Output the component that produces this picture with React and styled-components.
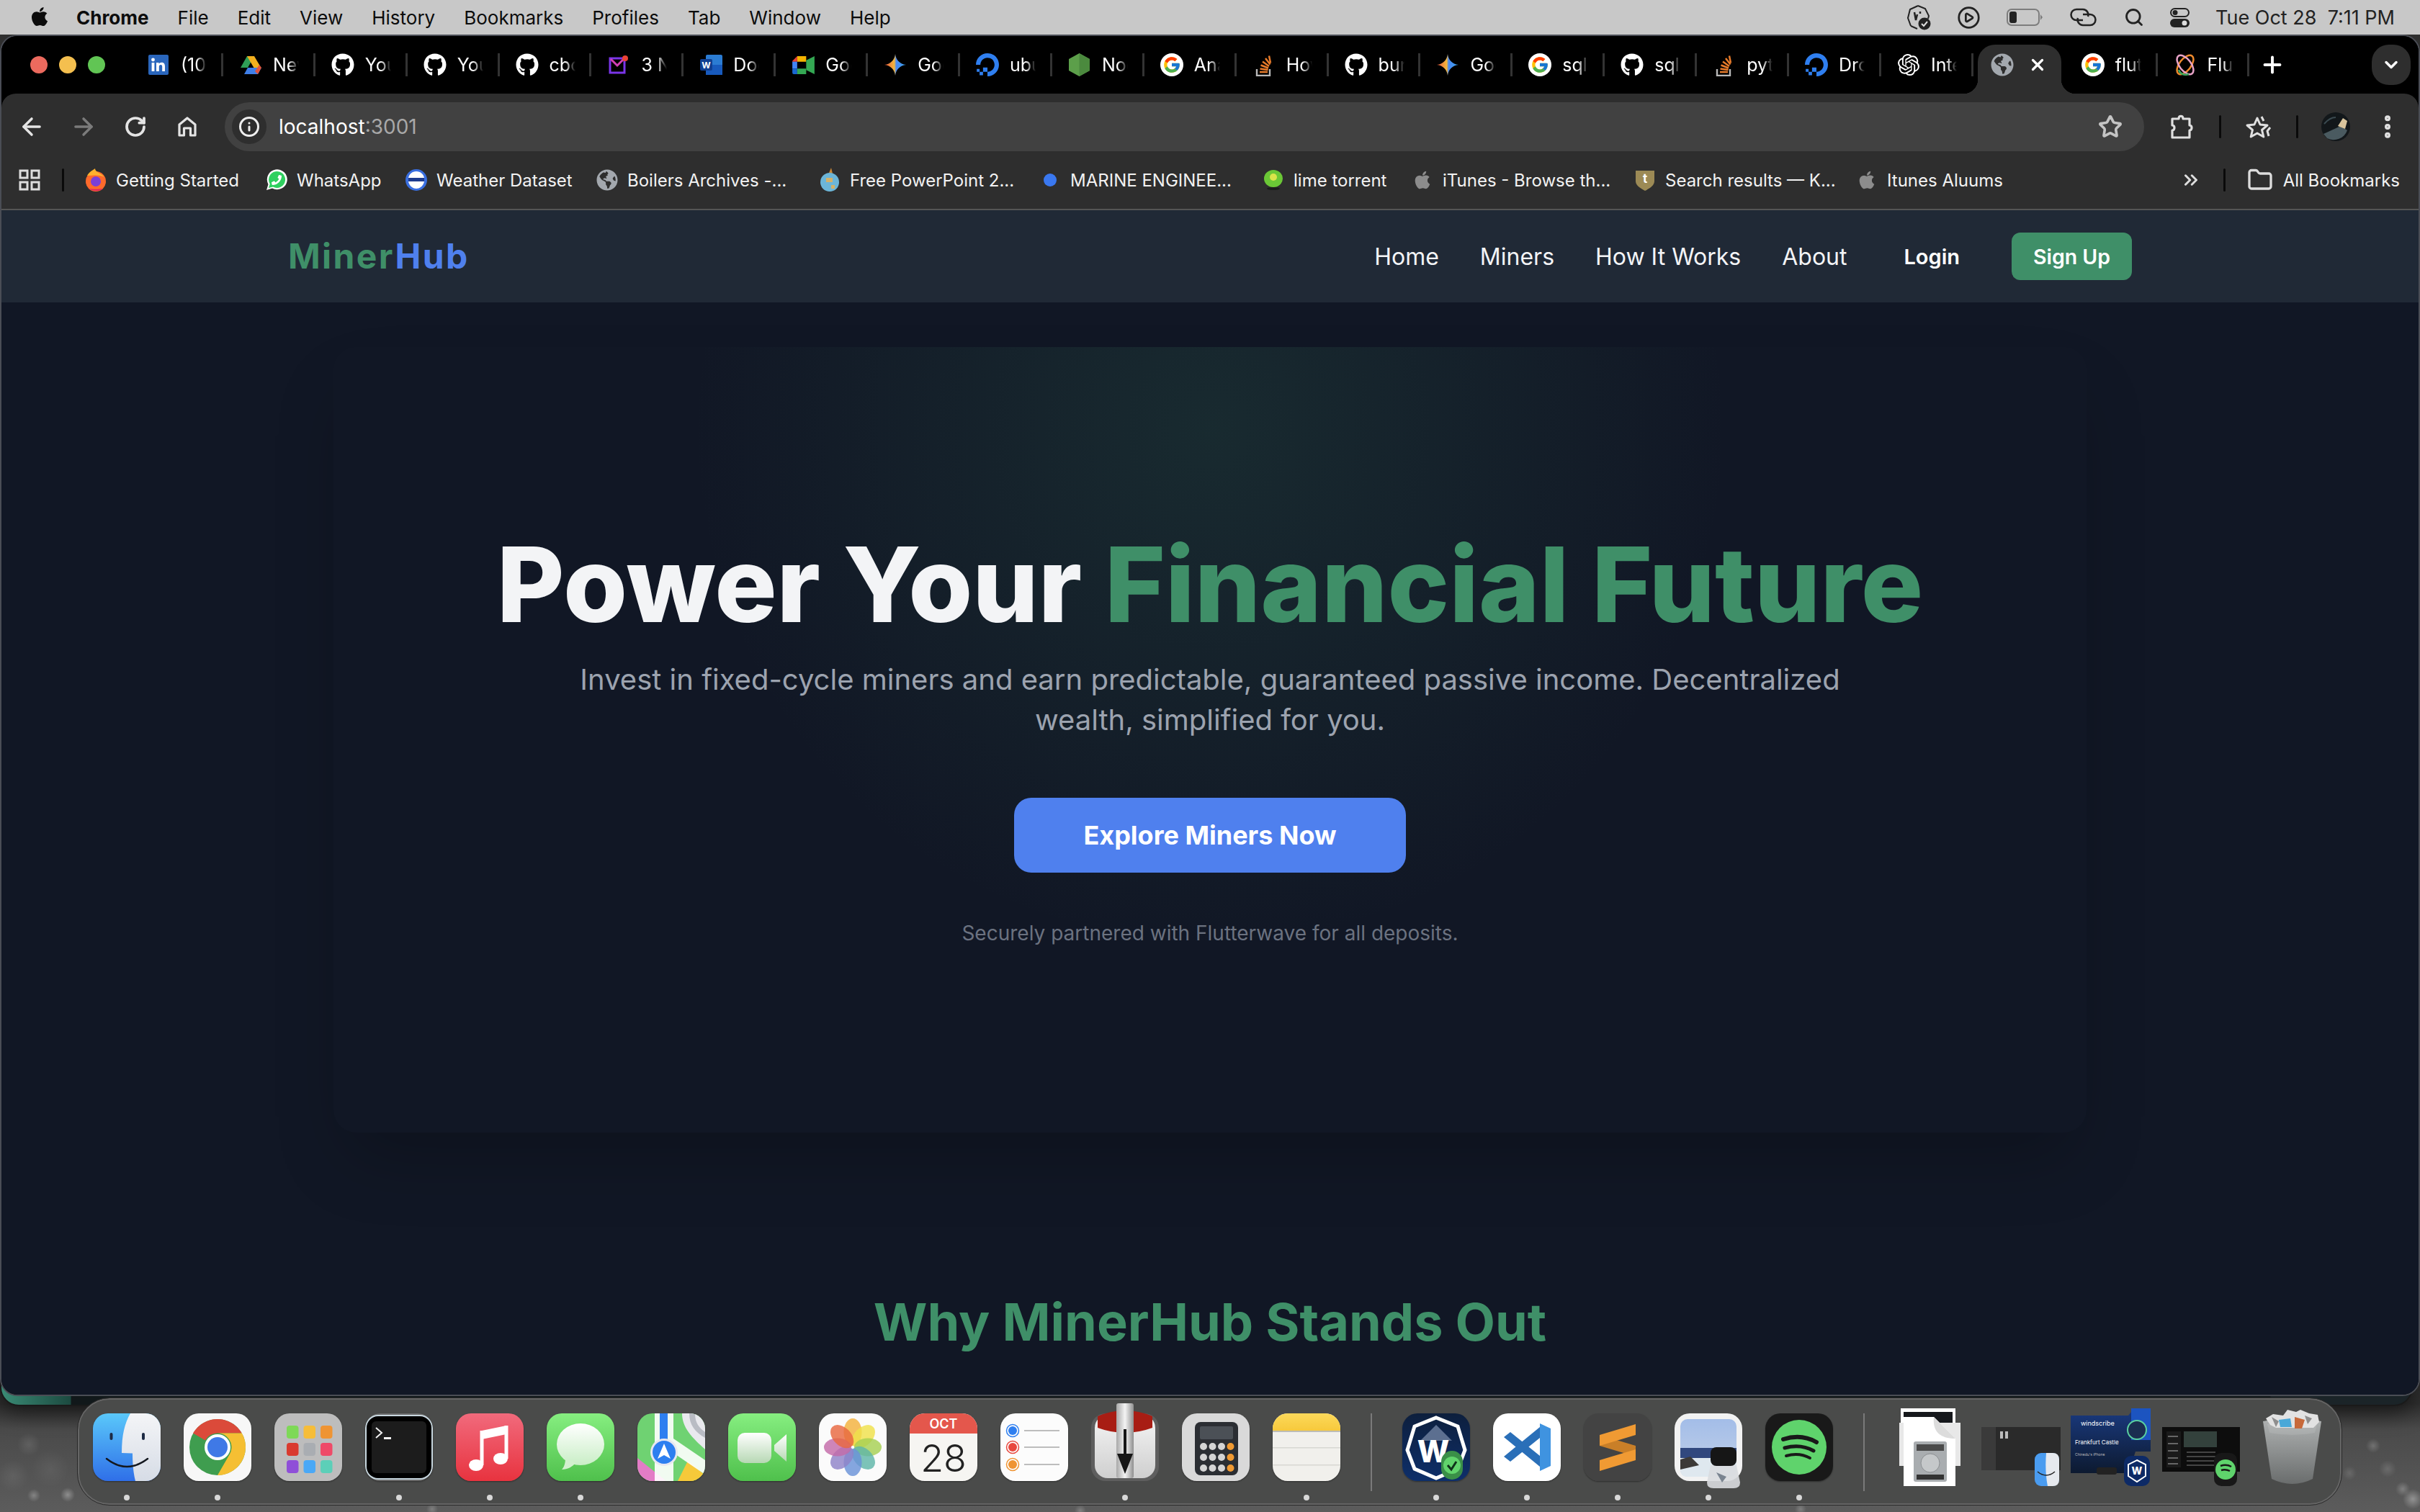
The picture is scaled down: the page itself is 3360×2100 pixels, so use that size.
import React from 'react'
import styled, { createGlobalStyle } from 'styled-components'
import {
  ArrowLeft, ArrowRight, RotateCw, Info, Star, MoreVertical, ChevronDown, Plus, X,
  Search, Folder, ChevronsRight, CirclePlay,
} from 'lucide-react'
import { FaApple, FaGithub, FaGlobeAmericas, FaPhoneAlt } from 'react-icons/fa'
import { FcGoogle } from 'react-icons/fc'
import { SiOpenai, SiDigitalocean } from 'react-icons/si'

const GREEN = '#3f8f68'
const BLUE = '#4f80ee'

const GlobalStyle = createGlobalStyle`
  html, body { margin: 0; padding: 0; background: #444; }
  body { font-family: Inter, "Liberation Sans", sans-serif; }
  * { box-sizing: border-box; }
`

const Desktop = styled.div`
  position: relative;
  width: 3360px;
  height: 2100px;
  overflow: hidden;
  display: flex;
  flex-direction: column;
  background:
    radial-gradient(circle at 94px 2076px, rgba(255,255,255,.32), transparent 10px),
    radial-gradient(circle at 47px 2077px, rgba(255,255,255,.26), transparent 9px),
    radial-gradient(circle at 40px 2006px, rgba(255,255,255,.1), transparent 16px),
    radial-gradient(circle at 70px 2040px, rgba(255,255,255,.06), transparent 26px),
    radial-gradient(circle at 18px 2050px, rgba(255,255,255,.07), transparent 22px),
    radial-gradient(circle at 3350px 2082px, rgba(255,255,255,.34), transparent 14px),
    radial-gradient(circle at 3336px 2068px, rgba(255,255,255,.24), transparent 10px),
    radial-gradient(circle at 3295px 2008px, rgba(255,255,255,.2), transparent 10px),
    radial-gradient(circle at 3315px 2040px, rgba(255,255,255,.14), transparent 12px),
    radial-gradient(circle at 3262px 2046px, rgba(255,255,255,.12), transparent 10px),
    radial-gradient(circle at 600px 2096px, rgba(255,255,255,.22), transparent 8px),
    radial-gradient(circle at 1500px 2098px, rgba(255,255,255,.22), transparent 8px),
    radial-gradient(circle at 2500px 2096px, rgba(255,255,255,.22), transparent 8px),
    linear-gradient(180deg, #2f2f2f 1950px, #4a4a4a 1985px, #5c5c5c 2100px);
`

const MenuBar = styled.header`
  position: relative;
  z-index: 3;
  flex: none;
  height: 48px;
  padding: 0 35px 0 40px;
  display: flex;
  align-items: center;
  gap: 40px;
  background: #c8c8c8;
  color: #0c0c0c;
  font-size: 26px;
`

const AppleMark = styled(FaApple)`
  margin: -2px -4px 0 0;
`

const MenuItem = styled.span`
  font-weight: ${p => (p.$bold ? 700 : 400)};
`

const MenuStatus = styled.div`
  margin-left: auto;
  display: flex;
  align-items: center;
  gap: 36px;
  font-size: 27px;
  color: #222;
  svg { display: block; }
`

const BackWindow = styled.div`
  position: absolute;
  left: 0;
  top: 1880px;
  width: 3350px;
  height: 73px;
  border-radius: 0 0 26px 26px;
  border: 2px solid #1a1a1a;
  background: linear-gradient(90deg, #3a8b75 0, #1c4a40 96px, #11181a 97px, #11181a 3150px, #1b2428 3151px);
  box-shadow: 0 8px 30px rgba(0,0,0,.55);
`

const Window = styled.div`
  position: relative;
  z-index: 2;
  flex: none;
  height: 1891px;
  display: flex;
  flex-direction: column;
  overflow: hidden;
  border: 2px solid #4a4d55;
  border-radius: 24px;
  background: #000;
`

const TabStrip = styled.div`
  flex: none;
  height: 80px;
  display: flex;
  align-items: flex-end;
  padding-left: 40px;
  background: #000;
`

const TabRow = styled.div`
  height: 68px;
  display: flex;
  align-items: flex-start;
  width: 100%;
`

const TrafficLights = styled.div`
  width: 140px;
  height: 56px;
  display: flex;
  align-items: center;
  gap: 16px;
`

const Light = styled.span`
  width: 24px;
  height: 24px;
  border-radius: 50%;
  background: ${p => p.$color};
`

const Tab = styled.div`
  position: relative;
  flex: none;
  width: 127.9px;
  height: 56px;
  padding-left: 22px;
  display: flex;
  align-items: center;
  gap: 15px;
  color: #fff;
  font-size: 25px;
  svg { display: block; }
  &::after {
    content: '';
    position: absolute;
    right: 0;
    top: 12px;
    height: 32px;
    width: 3px;
    background: #333;
  }
`

const FavSlot = styled.span`
  flex: none;
  width: 32px;
  display: flex;
  justify-content: center;
`

const TabTitle = styled.span`
  width: 36px;
  overflow: hidden;
  white-space: nowrap;
  -webkit-mask-image: linear-gradient(90deg, #000 60%, transparent 100%);
  mask-image: linear-gradient(90deg, #000 60%, transparent 100%);
`

const ActiveTab = styled.div`
  position: relative;
  flex: none;
  width: 116px;
  height: 68px;
  margin: 0 5.9px 0 6px;
  padding: 0 20px 12px 18px;
  display: flex;
  align-items: center;
  justify-content: space-between;
  border-radius: 24px 24px 0 0;
  background: #2e2e2e;
  color: #fff;
  &::before, &::after {
    content: '';
    position: absolute;
    bottom: 0;
    width: 20px;
    height: 20px;
  }
  &::before { left: -20px; background: radial-gradient(circle at 0 0, transparent 20px, #2e2e2e 20.5px); }
  &::after { right: -20px; background: radial-gradient(circle at 100% 0, transparent 20px, #2e2e2e 20.5px); }
`

const NewTab = styled.div`
  flex: none;
  width: 64px;
  height: 56px;
  display: flex;
  align-items: center;
  justify-content: center;
  color: #fff;
`

const TabMenu = styled.div`
  margin-left: auto;
  margin-right: 11px;
  width: 54px;
  height: 56px;
  border-radius: 24px;
  background: #2e2e2e;
  color: #fff;
  display: flex;
  align-items: center;
  justify-content: center;
`

const Toolbar = styled.div`
  flex: none;
  height: 92px;
  padding: 0 23px 0 6px;
  display: flex;
  align-items: center;
  background: #2e2e2e;
  border-radius: 20px 20px 0 0;
`

const NavButton = styled.div`
  flex: none;
  width: 72px;
  display: flex;
  justify-content: center;
  color: ${p => (p.$dim ? '#7b7b7b' : '#e4e4e4')};
`

const Omnibox = styled.div`
  flex: 1;
  height: 68px;
  margin: 0 32px 0 16px;
  padding: 0 30px 0 10px;
  display: flex;
  align-items: center;
  border-radius: 34px;
  background: #414141;
  color: #fff;
  font-size: 28px;
`

const InfoBadge = styled.span`
  flex: none;
  width: 48px;
  height: 48px;
  margin-right: 17px;
  border-radius: 50%;
  background: #2e2e2e;
  color: #eee;
  display: flex;
  align-items: center;
  justify-content: center;
`

const Port = styled.span`
  color: #a8a8a8;
`

const OmniStar = styled.span`
  margin-left: auto;
  display: flex;
  color: #c4c4c4;
`

const ToolIcons = styled.div`
  flex: none;
  display: flex;
  align-items: center;
  gap: 32px;
  color: #e0e0e0;
  svg { display: block; }
`

const ToolDivider = styled.span`
  width: 3px;
  height: 32px;
  border-radius: 2px;
  background: #0a0a0a;
`

const BookmarkBar = styled.div`
  flex: none;
  height: 70px;
  padding: 0 26px 12px 24px;
  display: flex;
  align-items: center;
  background: #2e2e2e;
  color: #f2f2f2;
  font-size: 24px;
  border-bottom: 2px solid #555;
  svg { display: block; flex: none; }
`

const BarDivider = styled.span`
  flex: none;
  width: 3px;
  height: 32px;
  margin: ${p => p.$margin};
  border-radius: 2px;
  background: #0a0a0a;
`

const Bookmark = styled.div`
  flex: none;
  display: flex;
  align-items: center;
  gap: 12px;
  width: ${p => (p.$w ? `${p.$w}px` : 'auto')};
  white-space: nowrap;
`

const BarEnd = styled.div`
  margin-left: auto;
  display: flex;
  align-items: center;
  color: #ddd;
`

const EndLabel = styled.span`
  margin-left: 14px;
  color: #f2f2f2;
`

const Page = styled.div`
  flex: 1;
  overflow: hidden;
  background: #111725;
`

const TopNav = styled.nav`
  height: 128px;
  background: #202936;
`

const NavInner = styled.div`
  width: 2560px;
  height: 100%;
  margin: 0 auto;
  display: flex;
  align-items: center;
  justify-content: space-between;
`

const Logo = styled.div`
  font-size: 48px;
  font-weight: 700;
  letter-spacing: 2.4px;
  margin-top: -2px;
  color: ${GREEN};
  span { color: ${BLUE}; }
`

const NavLinks = styled.div`
  display: flex;
  align-items: center;
  color: #f3f4f6;
  font-size: 32px;
  gap: 57px;
`

const NavAuth = styled.div`
  display: flex;
  align-items: center;
  margin-left: 22px;
  gap: 72px;
  font-size: 29px;
  font-weight: 600;
  color: #fff;
`

const SignUp = styled.div`
  width: 167px;
  height: 66px;
  border-radius: 12px;
  background: ${GREEN};
  font-size: 28.5px;
  display: flex;
  align-items: center;
  justify-content: center;
`

const Hero = styled.section`
  width: 2434px;
  margin: 62px auto 0;
  padding: 258px 0 257px;
  display: flex;
  flex-direction: column;
  align-items: center;
  text-align: center;
  border-radius: 32px;
  box-shadow: 0 50px 100px -24px rgba(0, 0, 0, .25);
  background:
    radial-gradient(ellipse 720px 720px at 50% 10.5%, rgba(63, 143, 104, .16), transparent 100%);
`

const Title = styled.h1`
  margin: 0 0 32px;
  font-size: 144px;
  line-height: 144px;
  font-weight: 800;
  color: #f3f4f6;
  white-space: nowrap;
  span { color: ${GREEN}; }
`

const Lead = styled.p`
  margin: 0;
  width: 1792px;
  font-size: 40px;
  line-height: 56px;
  color: #9ca3af;
`

const Cta = styled.div`
  width: 544px;
  height: 104px;
  margin-top: 80px;
  border-radius: 24px;
  background: ${BLUE};
  color: #fff;
  font-size: 36px;
  font-weight: 700;
  display: flex;
  align-items: center;
  justify-content: center;
`

const Note = styled.p`
  margin: 64px 0 0;
  font-size: 28px;
  line-height: 40px;
  color: #6b7280;
`

const SectionTitle = styled.h2`
  margin: 223px 0 0;
  text-align: center;
  font-size: 72px;
  line-height: 80px;
  font-weight: 700;
  color: ${GREEN};
`

const Dock = styled.div`
  position: relative;
  z-index: 3;
  flex: none;
  width: 3143px;
  height: 148px;
  margin: 3px 0 0 108px;
  padding: 19px 0 0 19px;
  display: flex;
  align-items: flex-start;
  border: 2px solid #656565;
  border-radius: 44px;
  background: #4a4b4a;
  outline: 1px solid #2a2a2a;
`

const DockGroup = styled.div`
  display: flex;
  gap: 32px;
`

const DockSlot = styled.div`
  position: relative;
  flex: none;
  width: ${p => p.$w || 94}px;
  height: 94px;
  margin-left: ${p => p.$ml || 0}px;
  display: flex;
  align-items: center;
  justify-content: center;
  svg { display: block; flex: none; }
  &::after {
    content: '';
    display: ${p => (p.$running ? 'block' : 'none')};
    position: absolute;
    left: 50%;
    bottom: -27px;
    width: 8px;
    height: 8px;
    margin-left: -4px;
    border-radius: 50%;
    background: #d8d8d8;
  }
`

const AppFrame = styled.div`
  width: 94px;
  height: 94px;
  border-radius: 21px;
  overflow: hidden;
  box-shadow: 0 1px 2px rgba(0,0,0,.4);
`

const DockDivider = styled.span`
  flex: none;
  width: 2px;
  height: 108px;
  margin: 0 42px;
  background: #7a7a7a;
`

const GWrap = styled.span`
  flex: none;
  width: 32px;
  height: 32px;
  border-radius: 50%;
  background: #fff;
  display: flex;
  align-items: center;
  justify-content: center;
`

/* favicons */

const Linkedin = () => (
  <svg width="28" height="28" viewBox="0 0 28 28">
    <rect width="28" height="28" rx="2" fill="#2a66bc" />
    <circle cx="6.5" cy="7" r="2.4" fill="#fff" />
    <path d="M4.6 11h3.8v12H4.6zM11 11h3.6v1.7c.7-1.2 2-2 3.8-2 3.4 0 4.6 2.1 4.6 5.4V23h-3.8v-6.2c0-1.7-.6-2.7-2-2.7-1.5 0-2.4 1-2.4 2.8V23H11z" fill="#fff" />
  </svg>
)

const Drive = () => (
  <svg width="30" height="27" viewBox="0 0 30 27">
    <path d="M10 1h10L11 17H1z" fill="#2f9e57" />
    <path d="M10 1h10l10 17H20z" fill="#f2b01e" />
    <path d="M6 26l5-9h19l-5 9z" fill="#3f7fe8" />
    <path d="M25 26l5-9-3-4-6 9z" fill="#e0533d" />
  </svg>
)

const Sparkle = () => (
  <svg width="30" height="30" viewBox="0 0 32 32">
    <defs>
      <linearGradient id="spark" x1="0" y1="0" x2="1" y2="0">
        <stop offset="0" stopColor="#e8543f" />
        <stop offset=".45" stopColor="#f4b63c" />
        <stop offset=".55" stopColor="#4a8af4" />
        <stop offset="1" stopColor="#3aa0e8" />
      </linearGradient>
    </defs>
    <path d="M16 0C17 9 23 15 32 16 23 17 17 23 16 32 15 23 9 17 0 16 9 15 15 9 16 0z" fill="url(#spark)" />
  </svg>
)

const MailFav = () => (
  <svg width="28" height="26" viewBox="0 0 28 26" fill="none">
    <path d="M2 4h20v20H2z" stroke="#7a35e8" strokeWidth="3" />
    <path d="M3 5l9 9 9-9" stroke="#d33fb5" strokeWidth="3" />
    <circle cx="23" cy="4" r="4" fill="#ea4335" />
  </svg>
)

const WordFav = () => (
  <svg width="31" height="28" viewBox="0 0 31 28">
    <rect x="8" y="0" width="23" height="28" rx="2" fill="#2b7cd3" />
    <rect x="8" y="14" width="23" height="14" fill="#185abd" />
    <rect x="0" y="6" width="17" height="16" rx="2" fill="#103f91" />
    <text x="8.5" y="18.5" textAnchor="middle" fontSize="12" fontWeight="700" fill="#fff" fontFamily="Inter">W</text>
  </svg>
)

const MeetFav = () => (
  <svg width="31" height="25" viewBox="0 0 32 26">
    <path d="M7 0h13v8H7z" fill="#f4b400" />
    <path d="M0 7L7 0v8H0z" fill="#ea4335" />
    <path d="M0 8h7v10H0z" fill="#4285f4" />
    <path d="M0 18h7v8H2a2 2 0 0 1-2-2z" fill="#1967d2" />
    <path d="M7 18h13v8H7z" fill="#34a853" />
    <path d="M20 6l12-6v26l-12-6z" fill="#34a853" />
  </svg>
)

const NodeFav = () => (
  <svg width="31" height="32" viewBox="0 0 31 32">
    <path d="M15.5 0L30 8v16l-14.500 8L1 24V8z" fill="#5c9f4a" />
    <path d="M15.5 0L30 8v16l-14.500 8z" fill="#4b8a3e" />
  </svg>
)

const StackFav = () => (
  <svg width="26" height="32" viewBox="0 0 26 32">
    <path d="M3 22v9h18v-9" fill="none" stroke="#b9b9b9" strokeWidth="2.4" />
    <path d="M7 26h11" stroke="#e87b2a" strokeWidth="2.5" />
    <path d="M7.5 21.5l11 1.5M8.5 16.5l10.5 4M11 11.5l9 6.500M15 7l6.500 8.500M20 3.500l2 10" stroke="#e87b2a" strokeWidth="2.5" fill="none" />
  </svg>
)

const OrbitFav = () => (
  <svg width="32" height="30" viewBox="0 0 32 30" fill="none" strokeWidth="2.5">
    <ellipse cx="16" cy="15" rx="8" ry="15.5" transform="rotate(38 16 15)" stroke="#f08a2c" />
    <ellipse cx="16" cy="15" rx="8" ry="15.5" transform="rotate(-38 16 15)" stroke="#e8a3c8" />
    <path d="M7 22c2 6 8 8 14 6" stroke="#3fa45f" />
  </svg>
)

const GoogleFav = () => (
  <GWrap><FcGoogle size={26} /></GWrap>
)

const GlobeFav = ({ size = 30 }) => <FaGlobeAmericas size={size} color="#a3a8ae" />
const GithubFav = () => <FaGithub size={32} color="#fff" />
const OceanFav = () => <SiDigitalocean size={32} color="#2f7ff0" />

const TABS = [
  [<Linkedin />, '(10) Feed'], [<Drive />, 'New folder'], [<GithubFav />, 'Your Repos'], [<GithubFav />, 'Your Repos'],
  [<GithubFav />, 'cbc-mining'], [<MailFav />, '3 New'], [<WordFav />, 'Document'], [<MeetFav />, 'Google Meet'],
  [<Sparkle />, 'Google'], [<OceanFav />, 'ubuntu'], [<NodeFav />, 'Node'],
  [<GoogleFav />, 'Analytics'], [<StackFav />, 'How to'], [<GithubFav />, 'burn'],
  [<Sparkle />, 'Google'], [<GoogleFav />, 'sql'], [<GithubFav />, 'sql'], [<StackFav />, 'python'],
  [<OceanFav />, 'Droplet'], [<SiOpenai size={30} color="#fff" />, 'Integrate'],
]

const TABS_AFTER = [
  [<GoogleFav />, 'flutter'], [<OrbitFav />, 'Flutterwave'],
]

/* bookmark bar icons */

const AppsGrid = () => (
  <svg width="30" height="30" viewBox="0 0 30 30" fill="none" stroke="#ddd" strokeWidth="3">
    <rect x="2" y="2" width="10" height="10" /><rect x="18" y="2" width="10" height="10" />
    <rect x="2" y="18" width="10" height="10" /><rect x="18" y="18" width="10" height="10" />
  </svg>
)

const FirefoxFav = () => (
  <svg width="30" height="32" viewBox="0 0 30 32">
    <circle cx="15" cy="18" r="14" fill="#ff6a2c" />
    <path d="M3 10C6 4 12 2 14 0c0 5 8 6 13 12-5-3-12-3-24-2z" fill="#ffb12e" />
    <circle cx="15" cy="18" r="7" fill="#7b3fd8" />
    <path d="M5 28c6 4 16 4 20 0-6 1-14 1-20 0z" fill="#e0245e" />
  </svg>
)

const WhatsFav = () => (
  <svg width="32" height="32" viewBox="0 0 32 32">
    <path d="M2 30l2.5-8A14 14 0 1 1 10 27.5z" fill="#fff" />
    <path d="M5 27l1.8-5.5A11.5 11.5 0 1 1 11 25.5z" fill="#2fd05f" />
    <foreignObject x="9" y="9" width="14" height="14"><FaPhoneAlt size={14} color="#fff" style={{ transform: 'scaleX(-1)' }} /></foreignObject>
  </svg>
)

const NoaaFav = () => (
  <svg width="30" height="32" viewBox="0 0 30 32">
    <circle cx="15" cy="16" r="15" fill="#3a6fe0" />
    <path d="M15 4c6 0 10 4 11 9H4c1-5 5-9 11-9z" fill="#fff" />
    <path d="M4 13h22v5H4z" fill="#1e3c8f" />
    <path d="M4 18h22c-1 6-6 10-11 10S5 24 4 18z" fill="#fff" />
  </svg>
)

const SlideFav = () => (
  <svg width="30" height="34" viewBox="0 0 30 34">
    <path d="M17 0l2 8-5-1z" fill="#c9883a" />
    <circle cx="15" cy="20" r="13" fill="#6cb6d8" />
    <path d="M10 14h9v6h-9zM17 24h5v5h-5z" fill="#d3b26a" />
  </svg>
)

const DotFav = () => (
  <svg width="18" height="18" viewBox="0 0 18 18"><circle cx="9" cy="9" r="9" fill="#3a78f0" /></svg>
)

const LimeFav = () => (
  <svg width="26" height="28" viewBox="0 0 26 28">
    <ellipse cx="13" cy="12" rx="13" ry="12" fill="#6bc736" />
    <circle cx="13" cy="10" r="5" fill="#d9e54a" />
    <ellipse cx="13" cy="26" rx="9" ry="2" fill="#1c1c1c" />
  </svg>
)

const ShieldFav = () => (
  <svg width="28" height="30" viewBox="0 0 28 30">
    <path d="M1 2h26v14c0 7-6 10-13 14C7 26 1 23 1 16z" fill="#9c8a55" />
    <text x="14" y="19" textAnchor="middle" fontSize="17" fontWeight="700" fill="#fff" fontFamily="Inter">t</text>
  </svg>
)

const BOOKMARKS = [
  { w: 251, icon: <FirefoxFav />, text: 'Getting Started' },
  { w: 194, icon: <WhatsFav />, text: 'WhatsApp' },
  { w: 265, icon: <NoaaFav />, text: 'Weather Dataset' },
  { w: 309, icon: <GlobeFav size={30} />, text: 'Boilers Archives -...' },
  { w: 306, icon: <SlideFav />, text: 'Free PowerPoint 2...' },
  { w: 310, icon: <DotFav />, text: 'MARINE ENGINEE...' },
  { w: 207, icon: <LimeFav />, text: 'lime torrent' },
  { w: 309, icon: <FaApple size={28} color="#8c8c8c" />, text: 'iTunes - Browse th...' },
  { w: 308, icon: <ShieldFav />, text: 'Search results — K...' },
  { icon: <FaApple size={28} color="#8c8c8c" />, text: 'Itunes Aluums' },
]

/* menu bar status icons */

const VpnStatus = () => (
  <svg width="34" height="36" viewBox="0 0 34 36" fill="none">
    <path d="M16 2l10 4 5 10-1 4M6 30L2 19l3-12 11-5" stroke="#222" strokeWidth="2" />
    <path d="M6 30l9 4" stroke="#222" strokeWidth="2" />
    <path d="M11 11l2 11 2-8M19 10v3" stroke="#222" strokeWidth="2.5" />
    <circle cx="25" cy="27" r="8.5" fill="#222" />
    <path d="M21 27l3 3 5-6" stroke="#ddd" strokeWidth="2" />
  </svg>
)

const BatteryStatus = () => (
  <svg width="50" height="24" viewBox="0 0 50 24" fill="none">
    <rect x="1" y="1" width="44" height="22" rx="6" stroke="#7d7d7d" strokeWidth="2" />
    <rect x="4" y="4" width="10" height="16" rx="3" fill="#222" />
    <path d="M47 8l3 4-3 4z" fill="#7d7d7d" />
  </svg>
)

const LinkStatus = () => (
  <svg width="41" height="26" viewBox="0 0 41 26" fill="none" stroke="#222" strokeWidth="2.5">
    <path d="M20 17h-9a7.5 7.5 0 0 1 0-15h9a7.5 7.5 0 0 1 7 10" />
    <path d="M20 9h10a7.5 7.5 0 0 1 0 15h-10a7.5 7.5 0 0 1-7-10" />
  </svg>
)

const ToggleStatus = () => (
  <svg width="27" height="27" viewBox="0 0 27 27">
    <rect x="1" y="1" width="25" height="11" rx="5.5" fill="none" stroke="#222" strokeWidth="2" />
    <circle cx="7" cy="6.5" r="3.5" fill="#222" />
    <rect y="15" width="27" height="12" rx="6" fill="#222" />
    <circle cx="20" cy="21" r="3.5" fill="#ddd" />
  </svg>
)

/* toolbar icons */

const HomeIcon = () => (
  <svg width="26" height="28" viewBox="0 0 26 28" fill="none" stroke="currentColor" strokeWidth="3.2">
    <path d="M2 26V11L13 2l11 9v15h-6.5V16h-9v10z" strokeLinejoin="round" />
  </svg>
)

const PuzzleIcon = () => (
  <svg width="40" height="34" viewBox="0 0 40 34" fill="none" stroke="currentColor" strokeWidth="3.2" strokeLinejoin="round">
    <path d="M7 6h9c0-5 6-5 6 0h9v9c4 0 4 7 0 7v10H7V22c4 0 4-7 0-7z" />
  </svg>
)

const StarList = () => (
  <svg width="40" height="34" viewBox="0 0 40 34" fill="none" stroke="currentColor" strokeWidth="3" strokeLinejoin="round">
    <path d="M18 5l4 9 10 1-7.5 6.5 2.3 9.5-8.800-5-8.800 5 2.300-9.500L4 15l10-1z" />
    <path d="M24 3l3 6M36 18l-4 5 2 7" />
  </svg>
)

const Avatar = () => (
  <svg width="40" height="40" viewBox="0 0 40 40">
    <circle cx="20" cy="20" r="20" fill="#12171a" />
    <path d="M3 30l24-11 9 6a20 20 0 0 1-28 11z" fill="#4a5a60" />
    <path d="M23 19l7-11 6 4-3 11z" fill="#d8c49c" />
    <path d="M4 16c6-7 12-9 16-9" stroke="#3a4a50" strokeWidth="2" fill="none" />
  </svg>
)

/* dock icons, drawn on a 94 x 94 grid */

const AppSvg = ({ children, defs }) => (
  <AppFrame>
    <svg width="94" height="94" viewBox="0 0 94 94">
      {defs && <defs>{defs}</defs>}
      {children}
    </svg>
  </AppFrame>
)

const grad = (id, from, to) => (
  <linearGradient id={id} x1="0" y1="0" x2="0" y2="1">
    <stop offset="0" stopColor={from} />
    <stop offset="1" stopColor={to} />
  </linearGradient>
)

const Finder = () => (
  <AppSvg defs={<>{grad('fb', '#5ac8fa', '#2f6fe8')}{grad('fw', '#f4f5f7', '#d6dce6')}</>}>
    <rect width="94" height="94" fill="url(#fb)" />
    <path d="M52 0C44 14 40 30 40 55l15 .5C55 70 56 82 59 94h35V0z" fill="url(#fw)" />
    <rect x="23.5" y="27" width="4" height="10" rx="2" fill="#1d2a44" />
    <rect x="68" y="27" width="4" height="10" rx="2" fill="#1d2a44" />
    <path d="M19 63q28 22 57 0" fill="none" stroke="#14181f" strokeWidth="2.5" strokeLinecap="round" />
  </AppSvg>
)

const Chrome = () => (
  <AppSvg>
    <rect width="94" height="94" fill="#f7f7f7" />
    <circle cx="47" cy="47" r="39" fill="#3f9d4f" />
    <path d="M47 8a39 39 0 0 1 33.8 19.5H47a19.5 19.5 0 0 0-17 10L13 27.5A39 39 0 0 1 47 8z" fill="#db4a3a" />
    <path d="M80.8 27.5A39 39 0 0 1 47 86l17-29.5a19.5 19.5 0 0 0-17-29z" fill="#f5bf33" />
    <circle cx="47" cy="47" r="18" fill="#fff" />
    <circle cx="47" cy="47" r="14" fill="#3f79e6" />
  </AppSvg>
)

const LAUNCH = ['#7ed957', '#f6bd3a', '#ef9433', '#d93a2e', '#a9adb2', '#ef4a68', '#8f4fd8', '#4aa8f6', '#5ccfb8']

const Launchpad = () => (
  <AppSvg>
    <rect width="94" height="94" fill="#bdbdbd" />
    {LAUNCH.map((c, i) => (
      <rect key={c} x={17 + (i % 3) * 23.5} y={17 + Math.floor(i / 3) * 24} width="16.5" height="18" rx="4" fill={c} />
    ))}
  </AppSvg>
)

const Terminal = () => (
  <AppSvg>
    <rect width="94" height="94" fill="#6d6d6d" />
    <rect y="2" width="94" height="90" rx="18" fill="#c7d6de" />
    <rect x="2" y="4" width="90" height="86" rx="16" fill="#000" />
    <rect x="9" y="11" width="76" height="72" rx="6" fill="#1c1c1c" />
    <path d="M15 20l8 7-8 7" fill="none" stroke="#f2f2f2" strokeWidth="2" />
    <rect x="26" y="33" width="10" height="3" fill="#f2f2f2" />
  </AppSvg>
)

const Music = () => (
  <AppSvg defs={grad('mu', '#f16a7c', '#e8333f')}>
    <rect width="94" height="94" fill="url(#mu)" />
    <path d="M70 17v46M36 24v48" fill="none" stroke="#fff" strokeWidth="5" />
    <path d="M36 24l34-7v12l-34 7z" fill="#fff" />
    <ellipse cx="28" cy="72" rx="10" ry="8" fill="#fff" />
    <ellipse cx="62" cy="63" rx="10" ry="8" fill="#fff" />
  </AppSvg>
)

const Messages = () => (
  <AppSvg defs={<>{grad('ms', '#86ee80', '#4fc04c')}{grad('mb', '#ffffff', '#c9eec6')}</>}>
    <rect width="94" height="94" fill="url(#ms)" />
    <ellipse cx="47" cy="43" rx="33" ry="29" fill="url(#mb)" />
    <path d="M26 62c0 8-2 13-5 16 8 0 15-4 19-9z" fill="#d2f0ce" />
  </AppSvg>
)

const Maps = () => (
  <AppSvg>
    <rect width="94" height="94" fill="#6fd272" />
    <path d="M62 0h32v50C76 34 62 20 62 0z" fill="#e9e9ee" />
    <path d="M72 0h8c0 14 6 20 14 26v8C80 26 72 16 72 0z" fill="#b9bcc4" />
    <path d="M0 62l40 32H0z" fill="#e37cc6" />
    <rect x="24" y="0" width="26" height="94" fill="#fff" opacity=".9" />
    <rect x="31" y="0" width="11" height="46" fill="#2d7ff0" />
    <path d="M56 94l14-28 24 20v8z" fill="#f6c93a" />
    <path d="M50 55l44 30V65L50 35z" fill="#fff" opacity=".9" />
    <circle cx="37" cy="54" r="19" fill="#e7e7f0" />
    <circle cx="37" cy="54" r="16" fill="#2d7ff0" />
    <path d="M37 42l9 21-9-5-9 5z" fill="#fff" />
  </AppSvg>
)

const FaceTime = () => (
  <AppSvg defs={<>{grad('ft', '#86ee80', '#4fc04c')}{grad('fc', '#ffffff', '#b7d8b4')}</>}>
    <rect width="94" height="94" fill="url(#ft)" />
    <rect x="13" y="27" width="47" height="42" rx="10" fill="url(#fc)" />
    <path d="M64 44l17-15v38L64 52z" fill="url(#fc)" />
  </AppSvg>
)

const PETALS = ['#f3b13c', '#efe14a', '#a6cf52', '#5fb6a8', '#6a93d8', '#8f82c8', '#c36aa8', '#e8683f']

const Photos = () => (
  <AppSvg>
    <rect width="94" height="94" fill="#fbfbfb" />
    {PETALS.map((c, i) => (
      <ellipse key={c} cx="47" cy="26" rx="12.5" ry="19" fill={c} opacity=".82" transform={`rotate(${i * 45} 47 47)`} />
    ))}
  </AppSvg>
)

const Calendar = () => (
  <AppSvg>
    <rect width="94" height="94" fill="#f6f5f2" />
    <rect width="94" height="28" fill="#e4574c" />
    <text x="47" y="21" textAnchor="middle" fontFamily="Inter" fontSize="18" fontWeight="600" fill="#fff">OCT</text>
    <text x="47" y="81" textAnchor="middle" fontFamily="Inter" fontSize="52" fontWeight="300" fill="#222">28</text>
  </AppSvg>
)

const Reminders = () => (
  <AppSvg>
    <rect width="94" height="94" fill="#fcfcfc" />
    {[['#2f7ff0', 24], ['#e8483f', 47], ['#ef9433', 71]].map(([c, y]) => (
      <g key={c}>
        <circle cx="17" cy={y} r="6" fill={c} />
        <circle cx="17" cy={y} r="8.5" fill="none" stroke={c} strokeWidth="1.5" />
        <rect x="33" y={y - 1} width="49" height="2" fill="#bdbdbd" />
      </g>
    ))}
  </AppSvg>
)

const Installer = () => (
  <svg width="94" height="94" viewBox="0 0 94 94" style={{ overflow: 'visible' }}>
    <defs>
      {grad('in', '#f4f4f4', '#cfcfcf')}
      <linearGradient id="col" x1="0" y1="0" x2="1" y2="0">
        <stop offset="0" stopColor="#a8a8a8" />
        <stop offset=".5" stopColor="#f4f4f4" />
        <stop offset="1" stopColor="#8f8f8f" />
      </linearGradient>
    </defs>
    <rect x="0" y="0" width="94" height="94" rx="20" fill="#5e5e5e" />
    <rect x="5" y="2" width="84" height="88" rx="18" fill="url(#in)" />
    <path d="M9 4q38-16 76 0v16q-38 14-76 0z" fill="#a81d14" />
    <rect x="35" y="-14" width="24" height="104" rx="3" fill="url(#col)" />
    <path d="M45 22h4v34h9L47 84 36 56h9z" fill="#161616" />
  </svg>
)

const Calculator = () => (
  <AppSvg>
    <rect width="94" height="94" fill="#d9d9d9" />
    <rect x="18" y="12" width="60" height="74" rx="8" fill="#2b2e33" />
    <rect x="25" y="18" width="46" height="18" rx="2" fill="#4b5056" />
    {[0, 1, 2].map(r => [0, 1, 2, 3].map(c => (
      <circle key={`${r}${c}`} cx={30 + c * 12.5} cy={46 + r * 15} r="5" fill={c === 3 ? '#f09a33' : '#d4d4d4'} />
    )))}
  </AppSvg>
)

const Notes = () => (
  <AppSvg defs={grad('no', '#fcd95a', '#f7c93c')}>
    <rect width="94" height="94" fill="#f1f0ec" />
    <rect width="94" height="24" fill="url(#no)" />
    <rect y="24" width="94" height="2" fill="#bdbdb6" />
    <rect y="47" width="94" height="1.5" fill="#d8d7d2" />
    <rect y="71" width="94" height="1.5" fill="#d8d7d2" />
  </AppSvg>
)

const Windscribe = () => (
  <AppSvg defs={grad('ws', '#0d1f3d', '#0e2f6a')}>
    <rect width="94" height="94" fill="url(#ws)" />
    <path d="M47 6l30 12 10 33-10 26-30 13-30-13L7 51l10-33z" fill="none" stroke="#fff" strokeWidth="5" />
    <path d="M47 16l22 22H25z" fill="#5c6f90" />
    <text x="43" y="68" textAnchor="middle" fontFamily="Inter" fontSize="42" fontWeight="800" fill="#fff">W</text>
    <rect x="54" y="52" width="30" height="40" rx="15" fill="#3a8f48" />
    <circle cx="69" cy="72" r="12" fill="#61d46c" />
    <path d="M63 72l5 6 7-11" fill="none" stroke="#10331a" strokeWidth="3" />
  </AppSvg>
)

const VSCode = () => (
  <AppSvg>
    <rect width="94" height="94" fill="#fff" />
    <path d="M15 33l9-7 41 33v15z" fill="#2a6fb8" />
    <path d="M15 60l9 7 41-33V19z" fill="#2a6fb8" />
    <path d="M65 14l15 7v52l-15 7z" fill="#3f93e0" />
  </AppSvg>
)

const Sublime = () => (
  <AppSvg>
    <rect width="94" height="94" fill="#434343" />
    <path d="M22 30l50 15v15L22 45z" fill="#c97f28" />
    <path d="M72 15v15L22 45V30z" fill="#f09a33" />
    <path d="M72 50v15L22 80V65z" fill="#f09a33" />
  </AppSvg>
)

const Preview = () => (
  <svg width="94" height="94" viewBox="0 0 94 94" style={{ overflow: 'visible' }}>
    <defs>{grad('sk', '#a3bde8', '#c4d2e8')}</defs>
    <rect width="94" height="94" rx="21" fill="#f2f2f2" />
    <rect x="8" y="8" width="78" height="80" rx="10" fill="url(#sk)" />
    <path d="M8 48h78v14H8z" fill="#31487e" />
    <path d="M8 62h78v16q0 10-10 10H18Q8 88 8 78z" fill="#dfe8ef" />
    <path d="M8 64l14-4 12 12-26 6z" fill="#3d3a38" />
    <path d="M50 72h36l5 24q0 8-9 8H54q-9 0-9-8z" fill="#d9dcdf" opacity=".9" />
    <rect x="50" y="47" width="36" height="26" rx="8" fill="#161616" />
    <path d="M58 82l14 6-6 8z" fill="#7a8490" />
  </svg>
)

const Spotify = () => (
  <AppSvg>
    <rect width="94" height="94" fill="#191919" />
    <circle cx="47" cy="47" r="38" fill="#5fd36c" />
    <g fill="none" stroke="#191919" strokeLinecap="round">
      <path d="M25 36q25-8 46 4" strokeWidth="6" />
      <path d="M27 48q22-6 40 4" strokeWidth="5" />
      <path d="M29 59q18-5 33 3" strokeWidth="4" />
    </g>
  </AppSvg>
)

const DiskDoc = () => (
  <svg width="85" height="108" viewBox="0 0 85 108">
    <rect x="2" y="0" width="76" height="24" fill="#fff" />
    <rect x="6" y="5" width="68" height="15" fill="#16181c" />
    <rect x="0" y="20" width="85" height="60" fill="#e8e8e8" />
    <path d="M6 12h42l30 30v66H6z" fill="#fff" />
    <path d="M48 12c-2 20 8 30 30 30z" fill="#dcdcdc" />
    <rect x="20" y="46" width="46" height="56" rx="3" fill="#a9adb0" />
    <rect x="24" y="50" width="38" height="9" fill="#4a4a4a" />
    <circle cx="43" cy="76" r="13" fill="#c5c8ca" stroke="#8c8f92" />
    <rect x="24" y="92" width="38" height="7" fill="#333" />
  </svg>
)

const ThumbFinder = () => (
  <svg width="114" height="108" viewBox="0 0 114 108">
    <rect x="0" y="26" width="110" height="60" fill="#3a3a3a" />
    <rect x="20" y="26" width="90" height="60" fill="#2a2a2a" />
    <rect x="26" y="32" width="4" height="10" fill="#bbb" />
    <rect x="33" y="32" width="4" height="10" fill="#bbb" />
    <rect x="74" y="62" width="34" height="46" rx="9" fill="#4a9cf0" />
    <path d="M90 62h9q9 0 9 9v28q0 9-9 9h-7q-4-20-2-46z" fill="#e6e9ee" />
    <path d="M78 88q12 10 24 0" fill="none" stroke="#222" strokeWidth="1.5" />
  </svg>
)

const ThumbVpn = () => (
  <svg width="111" height="108" viewBox="0 0 111 108">
    <defs>{grad('tv', '#1a3a80', '#0d1a30')}</defs>
    <path d="M0 10h80l8-10h23v60H90l-10 30H0z" fill="url(#tv)" />
    <path d="M84 0h27v44H84z" fill="#1c54c0" />
    <circle cx="92" cy="30" r="13" fill="#1a2e50" stroke="#5ad0a0" strokeWidth="2" />
    <text x="14" y="24" fontFamily="Inter" fontSize="9" fill="#fff">windscribe</text>
    <text x="6" y="50" fontFamily="Inter" fontSize="8" fill="#fff">Frankfurt Castle</text>
    <text x="6" y="66" fontFamily="Inter" fontSize="5" fill="#bbb">Chinedu's iPhone</text>
    <rect x="74" y="66" width="36" height="42" rx="10" fill="#0d2a66" />
    <path d="M92 72l12 6v16l-12 8-12-8V78z" fill="none" stroke="#fff" strokeWidth="2" />
    <text x="92" y="92" textAnchor="middle" fontFamily="Inter" fontSize="14" fontWeight="800" fill="#fff">W</text>
    <rect x="36" y="82" width="28" height="10" rx="3" fill="#222" />
  </svg>
)

const ThumbSpotify = () => (
  <svg width="111" height="108" viewBox="0 0 111 108">
    <rect x="0" y="26" width="108" height="62" fill="#0d0d0d" />
    <rect x="30" y="32" width="46" height="22" fill="#33413c" />
    <rect x="6" y="32" width="20" height="50" fill="#1a1a1a" />
    {[38, 48, 58, 68, 76].map(y => <rect key={y} x="8" y={y} width="14" height="2" fill="#666" />)}
    {[60, 66, 72, 78].map(y => <rect key={y} x="34" y={y} width="40" height="2" fill="#444" />)}
    <rect x="72" y="62" width="32" height="46" rx="10" fill="#181818" />
    <circle cx="88" cy="85" r="14" fill="#5fd36c" />
    <path d="M81 80q8-3 15 1M82 86q6-2 12 1" stroke="#181818" strokeWidth="2.5" fill="none" />
  </svg>
)

const Trash = () => (
  <svg width="85" height="108" viewBox="0 0 85 108">
    <defs>{grad('tr', '#b0b3b3', '#6a6d6d')}</defs>
    <path d="M2 18q40-8 81 0L71 98q-28 14-57 0z" fill="url(#tr)" />
    <path d="M8 22q34-7 69 0l-3 12q-31 6-63 0z" fill="#fff" opacity=".1" />
    <path d="M6 14l10-6 14 2 6-8 12 3 6-3 12 5 12 2 2 10-8 8H20l-8-4z" fill="#e2e2e2" />
    <path d="M24 16l16-2 2 12H26z" fill="#4aa8d8" />
    <path d="M46 12l14 4-4 12H46z" fill="#c7693a" />
    <path d="M14 12l10 6-4 8zM60 10l10 4-6 8z" fill="#8e8e8e" />
  </svg>
)

const APPS = [
  [Finder, true], [Chrome, true], [Launchpad, false], [Terminal, true], [Music, true], [Messages, true], [Maps, false],
  [FaceTime, false], [Photos, false], [Calendar, false], [Reminders, false], [Installer, true], [Calculator, false], [Notes, true],
]

const UTILS = [Windscribe, VSCode, Sublime, Preview, Spotify]

const TitleRow = ({ icon, title }) => (
  <Tab><FavSlot>{icon}</FavSlot><TabTitle>{title}</TabTitle></Tab>
)

export default function App() {
  return (
    <Desktop>
      <GlobalStyle />
      <BackWindow />
      <MenuBar>
        <AppleMark size={30} />
        <MenuItem $bold>Chrome</MenuItem>
        {['File', 'Edit', 'View', 'History', 'Bookmarks', 'Profiles', 'Tab', 'Window', 'Help'].map(item => (
          <MenuItem key={item}>{item}</MenuItem>
        ))}
        <MenuStatus>
          <VpnStatus />
          <CirclePlay size={33} strokeWidth={2} />
          <BatteryStatus />
          <LinkStatus />
          <Search size={28} strokeWidth={2.4} />
          <ToggleStatus />
          <span>Tue Oct 28&nbsp;&nbsp;7:11 PM</span>
        </MenuStatus>
      </MenuBar>

      <Window>
        <TabStrip>
          <TabRow>
            <TrafficLights>
              <Light $color="#ec6a5e" />
              <Light $color="#f4bf4f" />
              <Light $color="#61c554" />
            </TrafficLights>
            {TABS.map(([icon, title], i) => <TitleRow key={i} icon={icon} title={title} />)}
            <ActiveTab>
              <GlobeFav size={32} />
              <X size={26} strokeWidth={3} />
            </ActiveTab>
            {TABS_AFTER.map(([icon, title], i) => <TitleRow key={i} icon={icon} title={title} />)}
            <NewTab><Plus size={36} strokeWidth={2.6} /></NewTab>
            <TabMenu><ChevronDown size={28} strokeWidth={3} /></TabMenu>
          </TabRow>
        </TabStrip>

        <Toolbar>
          <NavButton><ArrowLeft size={38} strokeWidth={2.2} /></NavButton>
          <NavButton $dim><ArrowRight size={38} strokeWidth={2.2} /></NavButton>
          <NavButton><RotateCw size={32} strokeWidth={2.8} /></NavButton>
          <NavButton><HomeIcon /></NavButton>
          <Omnibox>
            <InfoBadge><Info size={30} strokeWidth={2.4} /></InfoBadge>
            localhost<Port>:3001</Port>
            <OmniStar><Star size={34} strokeWidth={2.6} /></OmniStar>
          </Omnibox>
          <ToolIcons>
            <PuzzleIcon />
            <ToolDivider />
            <StarList />
            <ToolDivider />
            <Avatar />
            <MoreVertical size={40} strokeWidth={2.8} />
          </ToolIcons>
        </Toolbar>

        <BookmarkBar>
          <AppsGrid />
          <BarDivider $margin="0 28px 0 30px" />
          {BOOKMARKS.map(b => (
            <Bookmark key={b.text} $w={b.w}><FavSlot>{b.icon}</FavSlot><span>{b.text}</span></Bookmark>
          ))}
          <BarEnd>
            <ChevronsRight size={30} strokeWidth={2.4} />
            <BarDivider $margin="0 30px 0 30px" />
            <Folder size={36} strokeWidth={2.2} />
            <EndLabel>All Bookmarks</EndLabel>
          </BarEnd>
        </BookmarkBar>

        <Page>
          <TopNav>
            <NavInner>
              <Logo>Miner<span>Hub</span></Logo>
              <NavLinks>
                <span>Home</span>
                <span>Miners</span>
                <span>How It Works</span>
                <span>About</span>
                <NavAuth>
                  <span>Login</span>
                  <SignUp>Sign Up</SignUp>
                </NavAuth>
              </NavLinks>
            </NavInner>
          </TopNav>

          <Hero>
            <Title>Power Your <span>Financial Future</span></Title>
            <Lead>Invest in fixed-cycle miners and earn predictable, guaranteed passive income. Decentralized wealth, simplified for you.</Lead>
            <Cta>Explore Miners Now</Cta>
            <Note>Securely partnered with Flutterwave for all deposits.</Note>
          </Hero>

          <SectionTitle>Why MinerHub Stands Out</SectionTitle>
        </Page>
      </Window>

      <Dock>
        <DockGroup>
          {APPS.map(([Icon, running], i) => (
            <DockSlot key={i} $running={running}><Icon /></DockSlot>
          ))}
        </DockGroup>
        <DockDivider />
        <DockGroup>
          {UTILS.map((Icon, i) => <DockSlot key={i} $running><Icon /></DockSlot>)}
        </DockGroup>
        <DockDivider />
        <DockSlot $w={85} $ml={6}><DiskDoc /></DockSlot>
        <DockSlot $w={114} $ml={29}><ThumbFinder /></DockSlot>
        <DockSlot $w={111} $ml={10}><ThumbVpn /></DockSlot>
        <DockSlot $w={111} $ml={16}><ThumbSpotify /></DockSlot>
        <DockSlot $w={85} $ml={27}><Trash /></DockSlot>
      </Dock>
    </Desktop>
  )
}
